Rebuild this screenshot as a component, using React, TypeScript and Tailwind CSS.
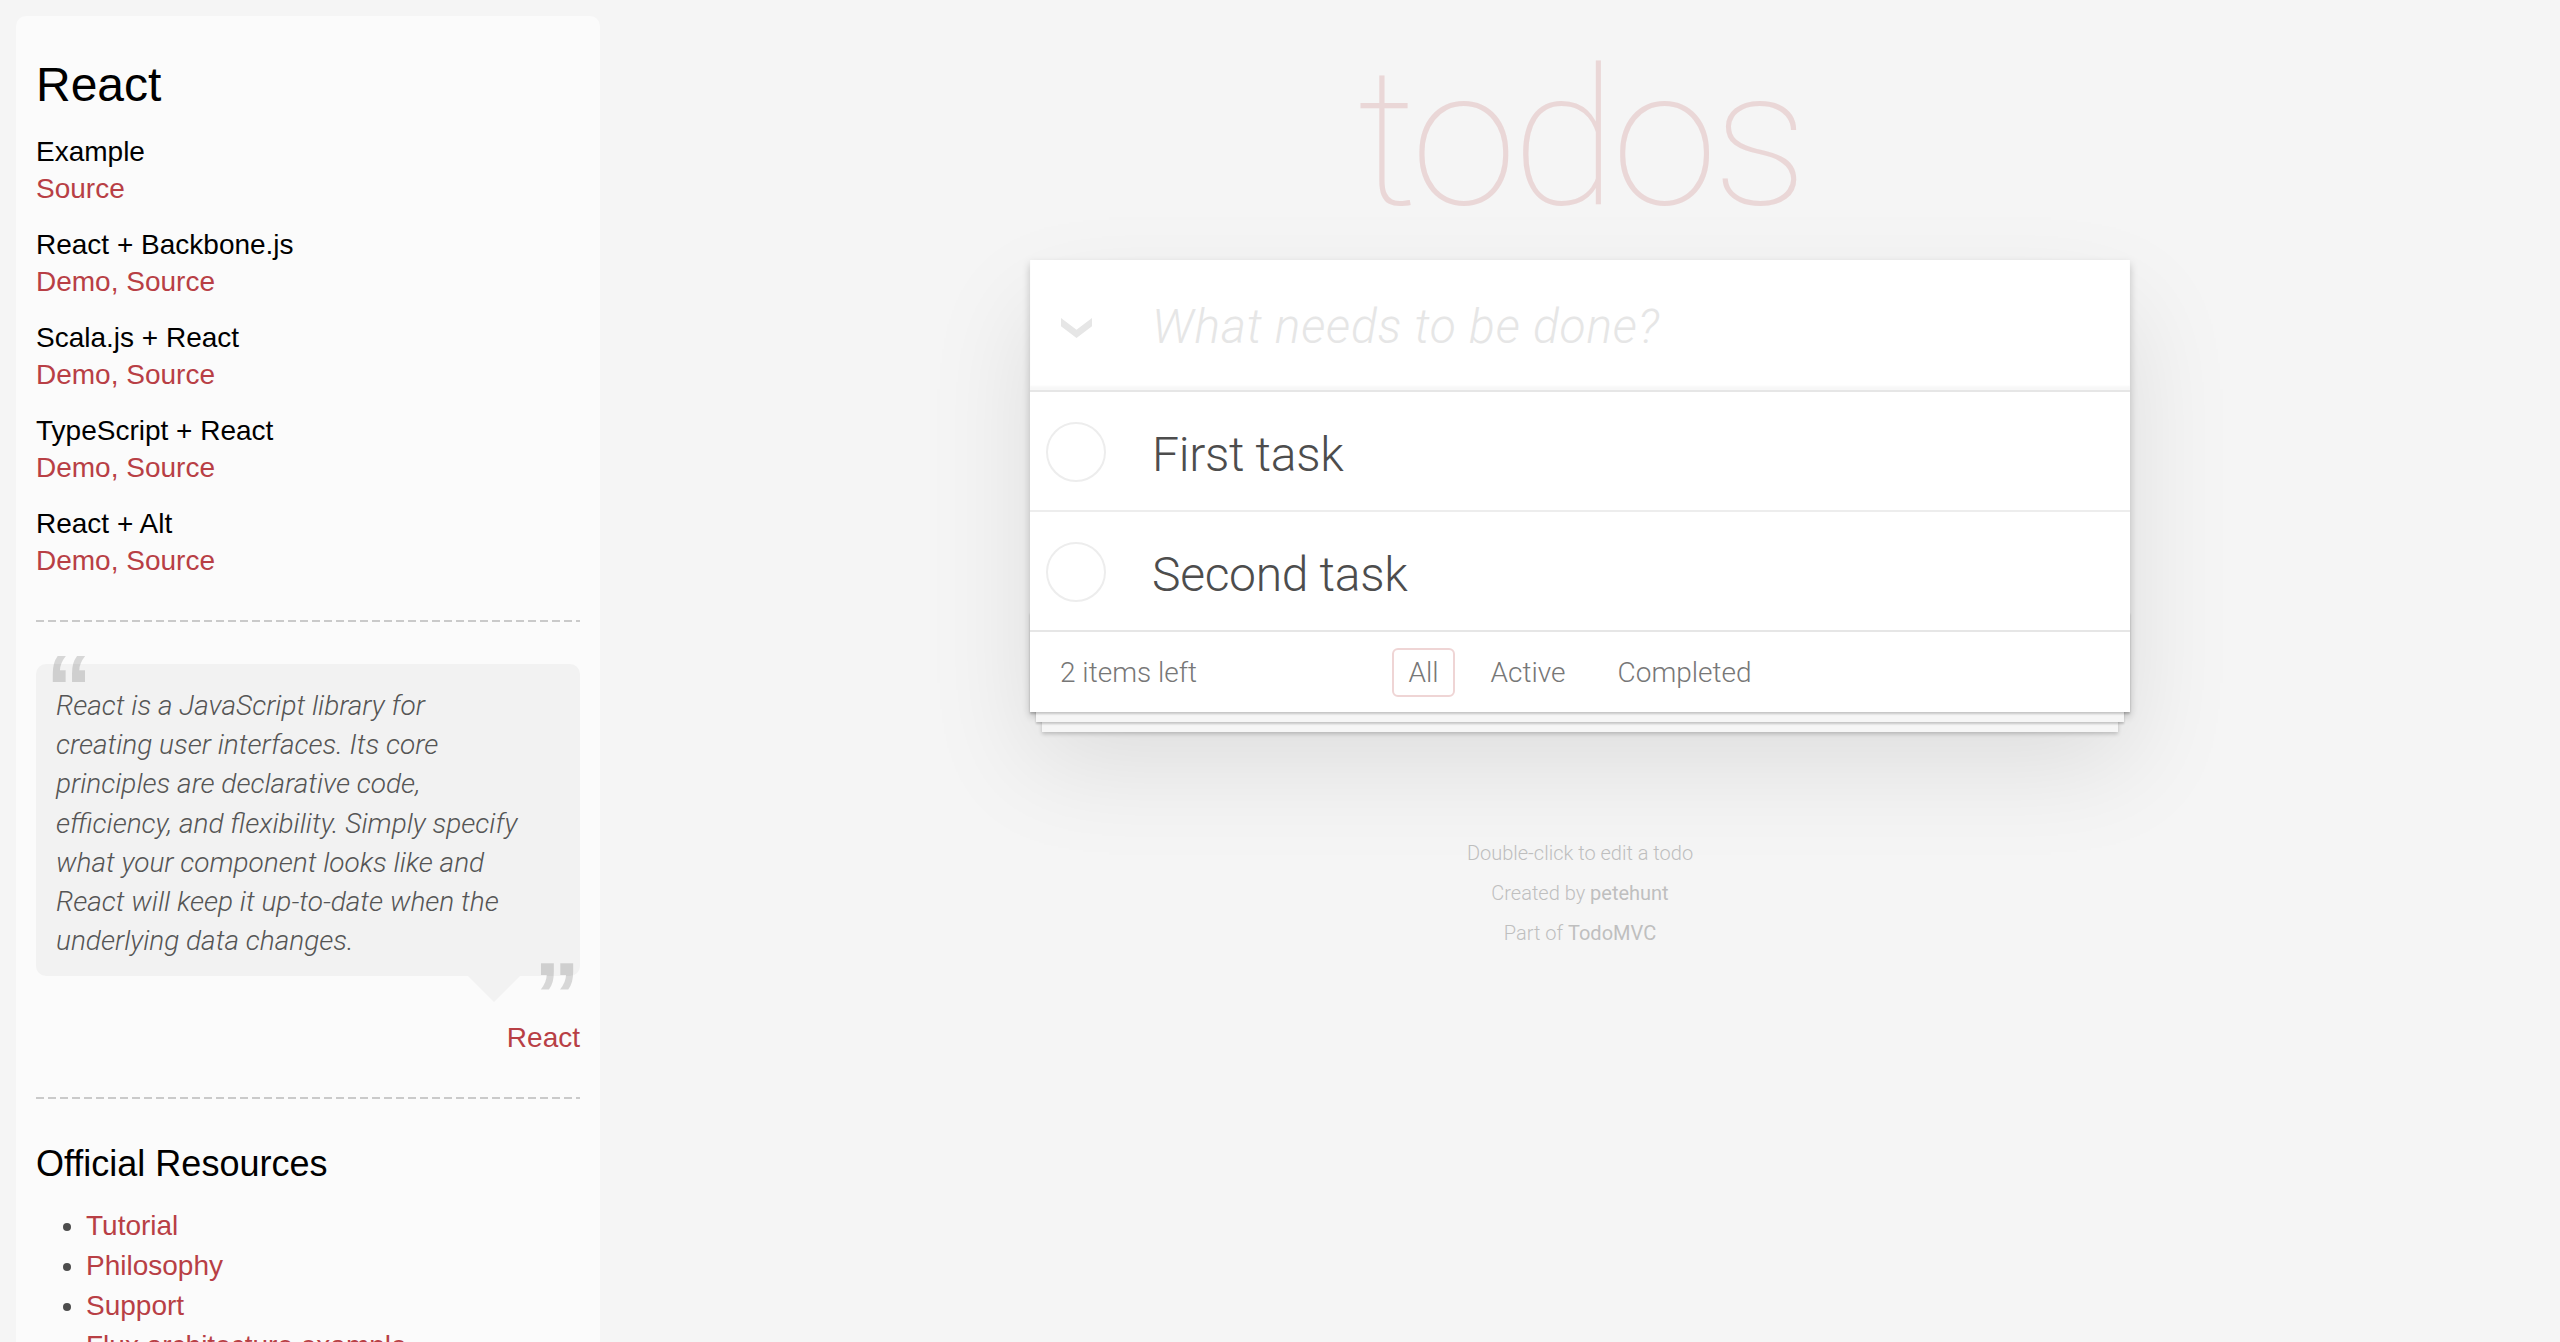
import React from "react";

const examples = [
  { name: "Example", links: ["Source"] },
  { name: "React + Backbone.js", links: ["Demo", "Source"] },
  { name: "Scala.js + React", links: ["Demo", "Source"] },
  { name: "TypeScript + React", links: ["Demo", "Source"] },
  { name: "React + Alt", links: ["Demo", "Source"] },
];

const resources = [
  "Tutorial",
  "Philosophy",
  "Support",
  "Flux architecture example",
  "Flux repository",
];

const quoteLines = [
  "React is a JavaScript library for",
  "creating user interfaces. Its core",
  "principles are declarative code,",
  "efficiency, and flexibility. Simply specify",
  "what your component looks like and",
  "React will keep it up-to-date when the",
  "underlying data changes.",
];

const todos = ["First task", "Second task"];

function Dashed({ className }: { className: string }) {
  return (
    <div
      className={
        "h-[2px] w-full bg-[repeating-linear-gradient(90deg,#cacaca_0px,#cacaca_8px,transparent_8px,transparent_12px)] " +
        className
      }
    />
  );
}

function Sidebar() {
  return (
    <aside className="mt-[16px] ml-[16px] w-[584px] shrink-0 self-stretch overflow-hidden rounded-t-[10px] bg-[#fbfbfb] px-[20px] pt-[41px] font-['Liberation_Sans',Arial,sans-serif] text-black">
      <h3 className="mb-[21px] text-[48px] leading-[56px] font-normal">React</h3>
      <dl className="pb-[20px]">
        {examples.map((ex, idx) => (
          <div key={ex.name} className={idx < examples.length - 1 ? "mb-[20px]" : ""}>
            <dt className="text-[28px] leading-[36.5px]">{ex.name}</dt>
            <dd className="text-[28px] leading-[36.5px] text-[#b83f45]">
              {ex.links.map((l, i) => (
                <React.Fragment key={l}>
                  {i > 0 ? ", " : ""}
                  <a className="text-[#b83f45]">{l}</a>
                </React.Fragment>
              ))}
            </dd>
          </div>
        ))}
      </dl>
      <Dashed className="mt-[21px]" />
      <blockquote className="relative mt-[42px] whitespace-nowrap rounded-[10px] bg-[#f2f2f2] pt-[22px] pb-[16px] pl-[20px] pr-[16px] font-['Roboto',sans-serif] text-[28px] leading-[39.2px] font-light italic text-[#555]">
        <span className="absolute left-[10px] top-[-22px] font-['Liberation_Sans',Arial,sans-serif] text-[92px] leading-[92px] font-bold not-italic text-[rgba(0,0,0,0.14)]">
          &ldquo;
        </span>
        {quoteLines.map((l, i) => (
          <React.Fragment key={i}>
            {l}
            {i < quoteLines.length - 1 ? <br /> : null}
          </React.Fragment>
        ))}
        <span className="absolute right-0 bottom-[-65px] font-['Liberation_Sans',Arial,sans-serif] text-[92px] leading-[92px] font-bold not-italic text-[rgba(0,0,0,0.14)]">
          &rdquo;
        </span>
        <span className="absolute top-full right-[60px] h-0 w-0 border-x-[26px] border-t-[26px] border-x-transparent border-t-[#f2f2f2]" />
      </blockquote>
      <div className="mt-[44px] text-right text-[28px] leading-[36.5px]">
        <a className="text-[#b83f45]">React</a>
      </div>
      <Dashed className="mt-[40px]" />
      <h4 className="mt-[43px] text-[36px] leading-[44px] font-normal">Official Resources</h4>
      <ul className="mt-[20px] ml-[50px] list-disc text-[28px] leading-[40px] text-[#4d4d4d]">
        {resources.map((r) => (
          <li key={r}>
            <a className="text-[#b83f45]">{r}</a>
          </li>
        ))}
      </ul>
    </aside>
  );
}

function Chevron() {
  return (
    <svg width="31" height="20" viewBox="0 0 31 20" className="block">
      <polygon points="0,0 15.5,11.7 31,0 31,8.3 15.5,20 0,8.3" fill="#e6e6e6" />
    </svg>
  );
}

function TodoApp() {
  return (
    <main className="flex flex-1 flex-col items-center pt-[39px] font-['Roboto',sans-serif] font-light">
      <h1 className="mb-[21px] text-center text-[192px] leading-[200px] tracking-[-5px] font-thin text-[#ead7d7]">
        todos
      </h1>
      <section className="relative w-[1100px] bg-white shadow-[0_4px_8px_0_rgba(0,0,0,0.2),0_50px_100px_0_rgba(0,0,0,0.1)]">
        <header className="flex h-[130px] items-center shadow-[inset_0_-4px_2px_rgba(0,0,0,0.03)]">
          <div className="w-[122px] shrink-0 pl-[31px] pt-[6px]">
            <Chevron />
          </div>
          <input
            className="h-full min-w-0 flex-1 bg-transparent pt-[3px] pr-[32px] font-['Roboto',sans-serif] text-[48px] font-light text-[#4d4d4d] outline-none placeholder:font-light placeholder:italic placeholder:tracking-[0.8px] placeholder:text-[#e6e6e6]"
            placeholder="What needs to be done?"
          />
        </header>
        <ul className="border-t-2 border-[#e6e6e6]">
          {todos.map((t, i) => (
            <li
              key={t}
              className={
                i < todos.length - 1
                  ? "flex items-start border-b-2 border-[#ededed] pl-[16px]"
                  : "flex items-start pl-[16px]"
              }
            >
              <svg width="60" height="60" viewBox="0 0 60 60" className="mt-[30px] shrink-0">
                <circle cx="30" cy="30" r="29" fill="none" stroke="#ededed" strokeWidth="2" />
              </svg>
              <label className="ml-[46px] pt-[34px] pb-[26px] text-[48px] leading-[58px] tracking-[-0.3px] text-[#4d4d4d]">
                {t}
              </label>
            </li>
          ))}
        </ul>
        <footer className="relative grid h-[82px] grid-cols-[1fr_auto_1fr] items-center border-t-2 border-[#e6e6e6] px-[30px] text-[28px] text-[#777]">
          <div
            aria-hidden
            className="pointer-events-none absolute inset-x-0 bottom-0 h-[100px] shadow-[0_2px_2px_rgba(0,0,0,0.2),0_16px_0_-6px_#f6f6f6,0_18px_2px_-6px_rgba(0,0,0,0.2),0_32px_0_-12px_#f6f6f6,0_34px_4px_-12px_rgba(0,0,0,0.2)]"
          />
          <span className="self-start mt-[21px] leading-[40px]">2 items left</span>
          <ul className="flex gap-[20px]">
            <li>
              <a className="block rounded-[6px] border-2 border-[#efd5d5] px-[14px] py-[6px] leading-[33px]">All</a>
            </li>
            <li>
              <a className="block rounded-[6px] border-2 border-transparent px-[14px] py-[6px] leading-[33px]">Active</a>
            </li>
            <li>
              <a className="block rounded-[6px] border-2 border-transparent px-[14px] py-[6px] leading-[33px]">Completed</a>
            </li>
          </ul>
          <span />
        </footer>
      </section>
      <footer className="mt-[131px] text-center text-[20px] leading-[20px] font-light text-[#bfbfbf]">
        <p className="mb-[20px]">Double-click to edit a todo</p>
        <p className="mb-[20px]">
          Created by <a className="font-normal">petehunt</a>
        </p>
        <p>
          Part of <a className="font-normal">TodoMVC</a>
        </p>
      </footer>
    </main>
  );
}

export default function App() {
  return (
    <div className="flex h-screen overflow-hidden bg-[#f5f5f5]">
      <Sidebar />
      <TodoApp />
    </div>
  );
}
